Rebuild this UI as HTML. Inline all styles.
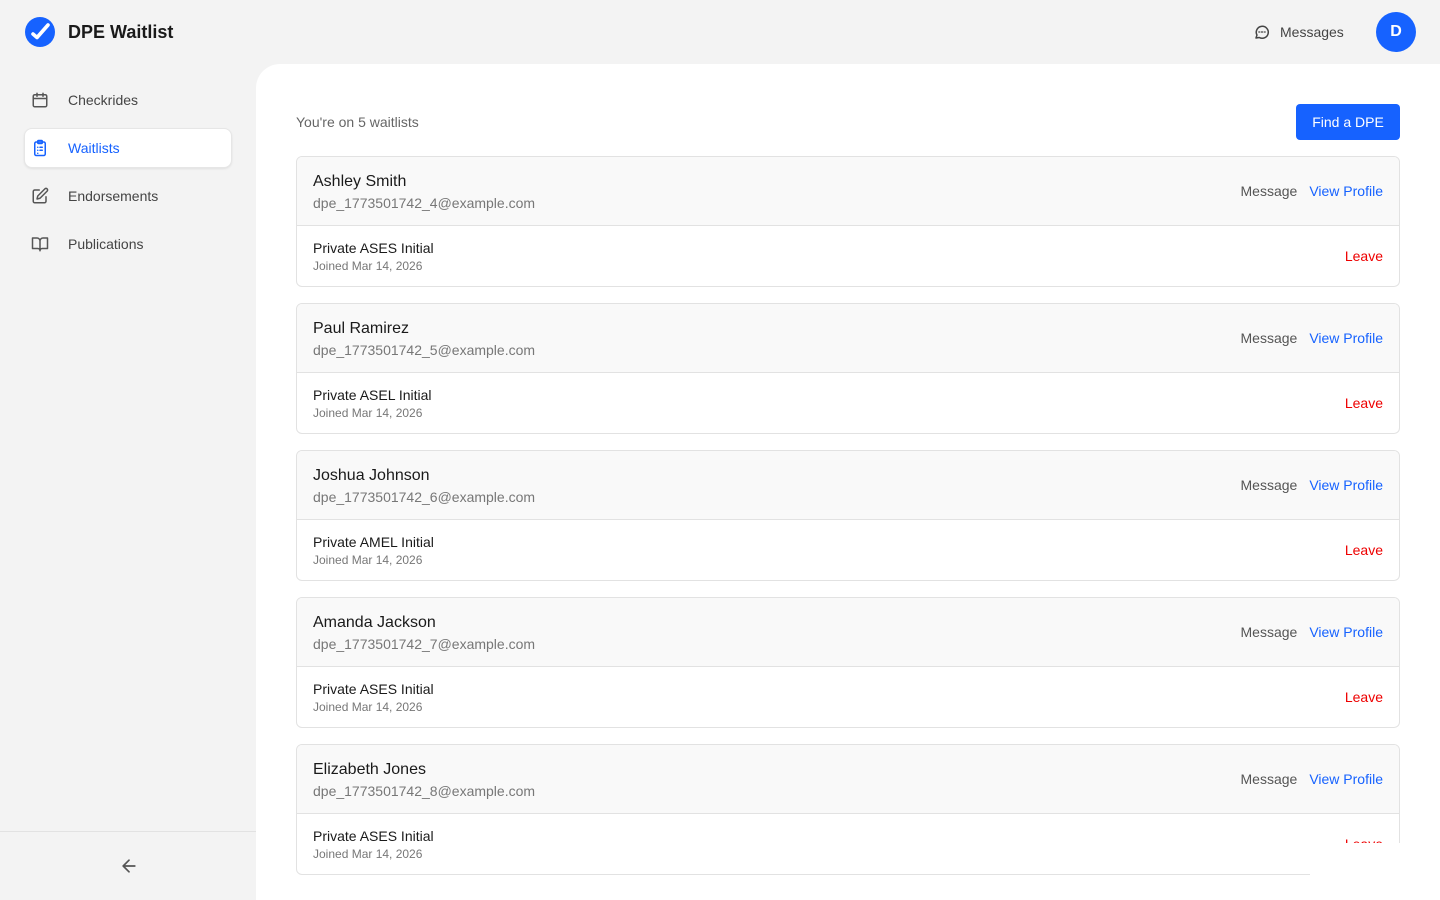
<!DOCTYPE html>
<html><head><meta charset="utf-8"><style>
*{box-sizing:border-box;margin:0;padding:0}
body{width:1440px;height:900px;overflow:hidden;background:#f3f3f3;font-family:"Liberation Sans",sans-serif;position:relative;color:#1a1a1a}
.top{position:absolute;left:0;top:0;width:1440px;height:64px}
.logo{position:absolute;left:25px;top:17px}
.title{position:absolute;left:68px;top:22px;font-size:18px;font-weight:bold;color:#1a1a1a}
.msg{position:absolute;left:1253px;top:23px;font-size:14px;color:#444;display:flex;align-items:center;gap:9px}
.av{position:absolute;left:1376px;top:12px;width:40px;height:40px;border-radius:50%;background:#1662ff;color:#fff;font-weight:bold;font-size:16px;text-align:center;line-height:40px}
.nav{position:absolute;left:24px;width:208px;height:40px;display:flex;align-items:center;font-size:14px;color:#444;border-radius:8px}
.nav svg{position:absolute;left:7px}
.nav span{position:absolute;left:44px}
.nav.act{background:#fff;color:#1662ff;box-shadow:0 1px 2px rgba(0,0,0,.08);border:1px solid #e6e6e6}
.nav.act svg{left:6px}.nav.act span{left:43px}
.sbb{position:absolute;left:0;top:831px;width:256px;border-top:1px solid #e2e2e2;height:69px}
.main{position:absolute;left:256px;top:64px;width:1184px;height:836px;background:#fff;border-top-left-radius:24px}
.count{position:absolute;left:296px;top:114px;font-size:14px;color:#666}
.btn{position:absolute;left:1296px;top:104px;width:104px;height:36px;background:#1662ff;color:#fff;border-radius:4px;font-size:14px;text-align:center;line-height:36px}
.card{position:absolute;left:296px;width:1104px;height:131px;border:1px solid #e2e2e2;border-radius:6px;overflow:hidden}
.hd{height:69px;background:#f9f9f9;border-bottom:1px solid #e2e2e2;position:relative}
.nm{position:absolute;left:16px;top:16px;font-size:16px;color:#1a1a1a}
.em{position:absolute;left:16px;top:38px;font-size:14px;color:#777}
.acts{position:absolute;right:16px;top:26px;font-size:14px}
.acts .m{color:#555;margin-right:12px}.acts .v{color:#1662ff}
.bd{position:relative;height:61px}
.ty{position:absolute;left:16px;top:14px;font-size:14px;color:#1a1a1a}
.jn{position:absolute;left:16px;top:33px;font-size:12px;color:#777}
.lv{position:absolute;right:16px;top:22px;font-size:14px;color:#e00}
</style></head><body>
<div class="top">
<svg class="logo" width="30" height="30" viewBox="0 0 30 30"><circle cx="15" cy="15" r="15" fill="#1662ff"/><path d="M8 17l4 3.5L23 8" stroke="#fff" stroke-width="3.6" fill="none" stroke-linecap="round" stroke-linejoin="round"/></svg>
<div class="title">DPE Waitlist</div>
<div class="msg"><svg width="18" height="18" viewBox="0 0 24 24" fill="none" stroke="#444" stroke-width="2" stroke-linecap="round" stroke-linejoin="round"><path d="M4 20l1.3-3.9A8 8 0 1 1 8.4 19.3z"/><circle cx="8.5" cy="12" r=".4"/><circle cx="12" cy="12" r=".4"/><circle cx="15.5" cy="12" r=".4"/></svg>Messages</div>
<div class="av">D</div>
</div>
<div class="nav" style="top:80px"><svg width="18" height="18" viewBox="0 0 24 24" fill="none" stroke="#555" stroke-width="2" stroke-linecap="round"><rect x="3" y="5" width="18" height="16" rx="2"/><path d="M8 3v4M16 3v4M3 10h18"/></svg><span>Checkrides</span></div>
<div class="nav act" style="top:128px"><svg width="18" height="18" viewBox="0 0 24 24" fill="none" stroke="#1662ff" stroke-width="2" stroke-linecap="round"><rect x="5" y="4" width="14" height="18" rx="2"/><rect x="9" y="2" width="6" height="4" rx="1"/><path d="M9 11h.01M12 11h3M9 15h.01M12 15h3M9 19h.01"/></svg><span>Waitlists</span></div>
<div class="nav" style="top:176px"><svg width="18" height="18" viewBox="0 0 24 24" fill="none" stroke="#555" stroke-width="2" stroke-linecap="round" stroke-linejoin="round"><path d="M11 4H5a2 2 0 0 0-2 2v13a2 2 0 0 0 2 2h13a2 2 0 0 0 2-2v-6"/><path d="M18.5 2.5a2.1 2.1 0 0 1 3 3L12 15l-4 1 1-4z"/></svg><span>Endorsements</span></div>
<div class="nav" style="top:224px"><svg width="18" height="18" viewBox="0 0 24 24" fill="none" stroke="#555" stroke-width="2" stroke-linejoin="round"><path d="M2 4h6a4 4 0 0 1 4 4v13a3 3 0 0 0-3-3H2zM22 4h-6a4 4 0 0 0-4 4v13a3 3 0 0 1 3-3h7z"/></svg><span>Publications</span></div>
<div class="sbb"><svg style="position:absolute;left:119px;top:24px" width="20" height="20" viewBox="0 0 24 24" fill="none" stroke="#555" stroke-width="2" stroke-linecap="round" stroke-linejoin="round"><path d="M19 12H5M12 19l-7-7 7-7"/></svg></div>
<div class="main"></div>
<div class="count">You're on 5 waitlists</div>
<div class="btn">Find a DPE</div>

<div class="card" style="top:156px"><div class="hd"><div class="nm">Ashley Smith</div><div class="em">dpe_1773501742_4@example.com</div><div class="acts"><span class="m">Message</span><span class="v">View Profile</span></div></div><div class="bd"><div class="ty">Private ASES Initial</div><div class="jn">Joined Mar 14, 2026</div><div class="lv">Leave</div></div></div>
<div class="card" style="top:303px"><div class="hd"><div class="nm">Paul Ramirez</div><div class="em">dpe_1773501742_5@example.com</div><div class="acts"><span class="m">Message</span><span class="v">View Profile</span></div></div><div class="bd"><div class="ty">Private ASEL Initial</div><div class="jn">Joined Mar 14, 2026</div><div class="lv">Leave</div></div></div>
<div class="card" style="top:450px"><div class="hd"><div class="nm">Joshua Johnson</div><div class="em">dpe_1773501742_6@example.com</div><div class="acts"><span class="m">Message</span><span class="v">View Profile</span></div></div><div class="bd"><div class="ty">Private AMEL Initial</div><div class="jn">Joined Mar 14, 2026</div><div class="lv">Leave</div></div></div>
<div class="card" style="top:597px"><div class="hd"><div class="nm">Amanda Jackson</div><div class="em">dpe_1773501742_7@example.com</div><div class="acts"><span class="m">Message</span><span class="v">View Profile</span></div></div><div class="bd"><div class="ty">Private ASES Initial</div><div class="jn">Joined Mar 14, 2026</div><div class="lv">Leave</div></div></div>
<div class="card" style="top:744px"><div class="hd"><div class="nm">Elizabeth Jones</div><div class="em">dpe_1773501742_8@example.com</div><div class="acts"><span class="m">Message</span><span class="v">View Profile</span></div></div><div class="bd"><div class="ty">Private ASES Initial</div><div class="jn">Joined Mar 14, 2026</div><div class="lv">Leave</div></div></div>
<div style="position:absolute;left:1310px;top:843px;width:130px;height:57px;background:#fff"></div>
</body></html>
